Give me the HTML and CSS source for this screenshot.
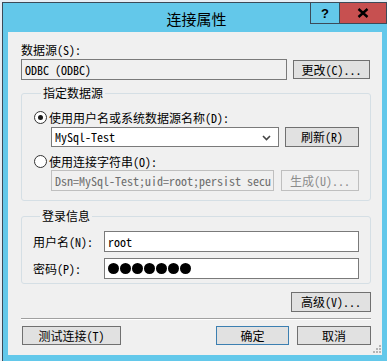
FILE: index.html
```html
<!DOCTYPE html>
<html lang="zh-CN">
<head>
<meta charset="utf-8">
<title>连接属性</title>
<link rel="stylesheet" href="styles.css">
</head>
<body>
<div class="window">
  <div class="titlebar">
    <div class="title">连接属性</div>
    <div class="caption-btns">
      <div class="cap help">?</div>
      <div class="cap close">
        <svg width="12" height="10" viewBox="0 0 12 10"><path d="M1.5 1 L10.5 9 M10.5 1 L1.5 9" stroke="#000" stroke-width="2.4" fill="none"/></svg>
      </div>
    </div>
  </div>
  <div class="client">
    <div class="lbl src-lbl">数据源(S):</div>
    <div class="row src-row">
      <div class="field ro src-field">ODBC (ODBC)</div>
      <div class="btn change-btn">更改(C)...</div>
    </div>

    <fieldset class="group g1">
      <legend>指定数据源</legend>
      <div class="radio-row"><span class="radio checked"></span><span class="rlabel">使用用户名或系统数据源名称(D):</span></div>
      <div class="row sub-row combo-row">
        <div class="combo">MySql-Test
          <svg class="chev" width="9" height="6" viewBox="0 0 9 6"><path d="M1 1 L4.5 4.5 L8 1" stroke="#444" stroke-width="1.6" fill="none"/></svg>
        </div>
        <div class="btn refresh-btn">刷新(R)</div>
      </div>
      <div class="radio-row r2"><span class="radio"></span><span class="rlabel">使用连接字符串(O):</span></div>
      <div class="row sub-row conn-row">
        <div class="field disabled conn-field">Dsn=MySql-Test;uid=root;persist secu</div>
        <div class="btn disabled gen-btn">生成(U)...</div>
      </div>
    </fieldset>

    <fieldset class="group g2">
      <legend>登录信息</legend>
      <div class="form-row"><span class="flabel">用户名(N):</span><div class="field user-field">root</div></div>
      <div class="form-row pw-row"><span class="flabel">密码(P):</span><div class="field pw-field"><span class="dot"></span><span class="dot"></span><span class="dot"></span><span class="dot"></span><span class="dot"></span><span class="dot"></span><span class="dot"></span></div></div>
    </fieldset>

    <div class="adv-row"><div class="btn adv-btn">高级(V)...</div></div>
    <div class="sep"></div>
    <div class="footer">
      <div class="btn test-btn">测试连接(T)</div>
      <div class="btn default ok-btn">确定</div>
      <div class="btn cancel-btn">取消</div>
    </div>
    <svg class="grip" width="8" height="8" viewBox="0 0 8 8"><g fill="#b4b4b4"><rect x="6" y="0" width="2" height="2"/><rect x="3" y="3" width="2" height="2"/><rect x="6" y="3" width="2" height="2"/><rect x="0" y="6" width="2" height="2"/><rect x="3" y="6" width="2" height="2"/><rect x="6" y="6" width="2" height="2"/></g></svg>
  </div>
</div>
</body>
</html>
```

FILE: styles.css
```css
* { box-sizing: border-box; }
html, body { margin: 0; }
body {
  width: 387px;
  height: 361px;
  overflow: hidden;
  background: #e6edf4;
  padding: 2px 0 0 2px;
}
.window {
  width: 387px;
  height: 360px;
  border: 1px solid #3b4a58;
  background: #63c8ea;
  padding: 0 6px 6px 5px;
  position: relative;
}
.titlebar {
  height: 29px;
  display: flex;
  align-items: center;
  justify-content: center;
  padding-left: 3px;
}
.title {
  font-family: "Noto Sans CJK SC", sans-serif;
  font-size: 15px;
  line-height: 15px;
  color: #000;
  margin-top: 1px;
}
.caption-btns {
  position: absolute;
  top: -1px;
  left: 307px;
  display: flex;
}
.cap {
  height: 22px;
  border: 1px solid #3b4a58;
  display: flex;
  align-items: center;
  justify-content: center;
}
.help {
  width: 29px;
  background: #63c8ea;
  font-family: "Liberation Sans", sans-serif;
  font-weight: bold;
  font-size: 13px;
  border-right: none;
}
.close {
  width: 48px;
  background: #c75050;
}
.client {
  width: 374px;
  height: 323px;
  background: #f0f0f0;
  position: relative;
  padding: 12px 11px 0 13px;
  font-family: "Noto Sans Mono CJK SC", "Noto Sans CJK SC", monospace;
  font-size: 12px;
  line-height: 12px;
  color: #000;
}
.lbl { height: 12px; }
.row { display: flex; align-items: center; justify-content: space-between; }
.src-row { margin-top: 3px; }
.field {
  border: 1px solid #7a7a7a;
  background: #fff;
  height: 21px;
  display: flex;
  align-items: center;
  padding-left: 3px;
  white-space: nowrap;
  overflow: hidden;
}
.field.ro { background: #f0f0f0; }
.src-field { width: 266px; }
.btn {
  height: 20px;
  border: 1px solid #707070;
  background: #e1e1e1;
  display: flex;
  align-items: center;
  justify-content: center;
  white-space: nowrap;
}
.btn.disabled {
  border-color: #bfbfbf;
  background: #f0f0f0;
  color: #8c8c8c;
}
.btn.default { border-color: #3c7fb1; }
.change-btn { width: 77px; height: 19px; margin-right: 1px; }

.group {
  margin: 0;
  border: 1px solid #d5dfe5;
  border-radius: 3px;
  min-width: 0;
}
.group legend {
  padding: 0 2px;
  margin-left: 7px;
  height: 12px;
  line-height: 12px;
}
.g1 { margin-top: 7px; padding: 12px 11px 9px 12px; }
.radio-row { display: flex; align-items: center; height: 13px; }
.radio {
  width: 13px;
  height: 13px;
  border: 1px solid #333;
  border-radius: 50%;
  background: #fff;
  display: flex;
  align-items: center;
  justify-content: center;
  margin-right: 2px;
}
.radio.checked::after {
  content: "";
  width: 5px;
  height: 5px;
  border-radius: 50%;
  background: #1a1a1a;
}
.sub-row { padding-left: 17px; }
.combo-row { margin-top: 3px; }
.combo {
  width: 228px;
  height: 20px;
  border: 1px solid #7a7a7a;
  background: #fff;
  display: flex;
  align-items: center;
  padding-left: 3px;
  position: relative;
}
.chev { position: absolute; right: 7px; top: 7px; }
.refresh-btn { width: 74px; }
.r2 { margin-top: 8px; }
.conn-row { margin-top: 2px; }
.field.disabled {
  border-color: #bfbfbf;
  background: #f0f0f0;
  color: #6d6d6d;
}
.conn-field { width: 223px; }
.gen-btn { width: 78px; height: 21px; }

.g2 { margin-top: 9px; padding: 9px 11px 4px 11px; }
.form-row { display: flex; align-items: center; }
.pw-row { margin-top: 6px; }
.flabel { width: 71px; }
.user-field, .pw-field { flex: 1; }
.dot {
  width: 11px;
  height: 11px;
  border-radius: 50%;
  background: #000;
  margin-right: 1px;
}
.adv-row { display: flex; justify-content: flex-end; margin-top: 8px; }
.adv-btn { width: 80px; }
.sep {
  margin-top: 6px;
  height: 2px;
  border-top: 1px solid #a0a0a0;
  border-bottom: 1px solid #fff;
}
.footer { display: flex; margin-top: 6px; }
.footer .btn { height: 19px; }
.test-btn { width: 99px; margin-left: 1px; margin-right: auto; }
.ok-btn { width: 73px; margin-right: 8px; }
.cancel-btn { width: 74px; }
.grip { position: absolute; right: 1px; bottom: 2px; }
```
